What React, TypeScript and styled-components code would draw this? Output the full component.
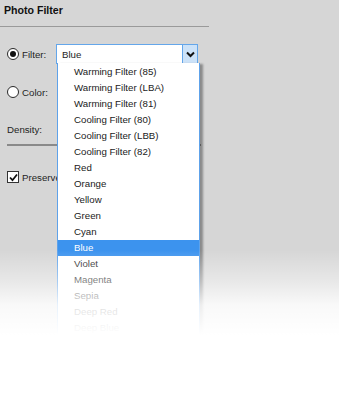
import React from 'react'
import styled, { createGlobalStyle } from 'styled-components'

const GlobalStyle = createGlobalStyle`
  html, body {
    margin: 0;
    padding: 0;
    background: #d6d6d6;
  }
  body {
    font-family: 'Liberation Sans', Arial, sans-serif;
    font-size: 9.7px;
    color: #1e1e1e;
  }
`

const filters = [
  'Warming Filter (85)',
  'Warming Filter (LBA)',
  'Warming Filter (81)',
  'Cooling Filter (80)',
  'Cooling Filter (LBB)',
  'Cooling Filter (82)',
  'Red',
  'Orange',
  'Yellow',
  'Green',
  'Cyan',
  'Blue',
  'Violet',
  'Magenta',
  'Sepia',
  'Deep Red',
  'Deep Blue',
  'Deep Emerald',
  'Deep Yellow',
  'Underwater',
]

const Screen = styled.div`
  position: relative;
  width: 339px;
  height: 405px;
  overflow: hidden;
  background: #d6d6d6;
`

const Panel = styled.div`
  display: flex;
  flex-direction: column;
  width: 209px;
`

const Title = styled.h1`
  margin: 0;
  padding: 4px 0 0 4px;
  height: 22px;
  line-height: 13px;
  font-size: 10.6px;
  font-weight: bold;
  color: #111;
  border-bottom: 1px solid #9a9a9a;
`

const Form = styled.div`
  display: flex;
  flex-direction: column;
  padding: 17px 0 0 7px;
`

const Row = styled.div<{ $h: number }>`
  display: flex;
  align-items: center;
  height: ${(p) => p.$h}px;
`

const Radio = styled.span<{ $on?: boolean }>`
  box-sizing: border-box;
  width: 12px;
  height: 12px;
  border-radius: 50%;
  border: 1px solid #2a2a2a;
  background: #fff;
  display: flex;
  align-items: center;
  justify-content: center;
  margin-right: 3px;

  &::after {
    content: '';
    display: ${(p) => (p.$on ? 'block' : 'none')};
    width: 6px;
    height: 6px;
    border-radius: 50%;
    background: #111;
  }
`

const Label = styled.span<{ $w?: number }>`
  width: ${(p) => (p.$w ? `${p.$w}px` : 'auto')};
  white-space: nowrap;
`

const Select = styled.div`
  position: relative;
  box-sizing: border-box;
  width: 142px;
  height: 20px;
  border: 1px solid #64a6ea;
  background: #fff;
  display: flex;
  align-items: center;
`

const SelectValue = styled.span`
  flex: 1;
  padding-left: 5px;
`

const ArrowBox = styled.span`
  width: 14px;
  height: 18px;
  border-left: 1px solid #64a6ea;
  background: #cce2f8;
  display: flex;
  align-items: center;
  justify-content: center;
`

const Menu = styled.ul`
  position: absolute;
  top: 18px;
  left: 0px;
  z-index: 2;
  box-sizing: border-box;
  width: 143px;
  margin: 0;
  padding: 1px 0 0;
  list-style: none;
  background: #fff;
  border-left: 1px solid #5ea2ea;
  border-right: 1px solid #5ea2ea;
  box-shadow: 3px 1px 2px rgba(0, 0, 0, 0.35);
`

const Item = styled.li<{ $active?: boolean }>`
  height: 16px;
  line-height: 16px;
  padding-left: 16px;
  white-space: nowrap;
  color: ${(p) => (p.$active ? '#fff' : '#1a1a1a')};
  background: ${(p) => (p.$active ? '#3c93ee' : 'transparent')};
`

const Slider = styled.div`
  width: 194px;
  height: 2px;
  margin-top: 7px;
  background: #8a8a8a;
`

const Check = styled.span`
  box-sizing: border-box;
  width: 12px;
  height: 12px;
  border: 1px solid #333;
  background: #fff;
  display: flex;
  align-items: center;
  justify-content: center;
  margin-right: 3px;
`

const Fade = styled.div`
  position: absolute;
  left: 0;
  right: 0;
  top: 0;
  bottom: 0;
  z-index: 5;
  pointer-events: none;
  background: linear-gradient(
    to bottom,
    rgba(255, 255, 255, 0) 0px,
    rgba(255, 255, 255, 0) 250px,
    rgba(255, 255, 255, 0.45) 282px,
    rgba(255, 255, 255, 0.85) 305px,
    rgba(255, 255, 255, 1) 335px
  );
`

export default function App() {
  return (
    <Screen>
      <GlobalStyle />
      <Panel>
        <Title>Photo Filter</Title>
        <Form>
          <Row $h={20}>
            <Radio $on />
            <Label $w={34}>Filter:</Label>
            <Select>
              <SelectValue>Blue</SelectValue>
              <ArrowBox>
                <svg width="9" height="7" viewBox="0 0 9 7">
                  <path d="M1 1.5 L4.5 5 L8 1.5" fill="none" stroke="#111" strokeWidth="2" />
                </svg>
              </ArrowBox>
              <Menu>
                {filters.map((f) => (
                  <Item key={f} $active={f === 'Blue'}>
                    {f}
                  </Item>
                ))}
              </Menu>
            </Select>
          </Row>
          <Row $h={20} style={{ marginTop: 18 }}>
            <Radio />
            <Label>Color:</Label>
          </Row>
          <Row $h={16} style={{ marginTop: 19 }}>
            <Label>Density:</Label>
          </Row>
          <Slider />
          <Row $h={14} style={{ marginTop: 24 }}>
            <Check>
              <svg width="9" height="9" viewBox="0 0 9 9">
                <path d="M1 4.5 L3.5 7.2 L8 1.5" fill="none" stroke="#111" strokeWidth="1.8" />
              </svg>
            </Check>
            <Label>Preserve Luminosity</Label>
          </Row>
        </Form>
      </Panel>
      <Fade />
    </Screen>
  )
}
